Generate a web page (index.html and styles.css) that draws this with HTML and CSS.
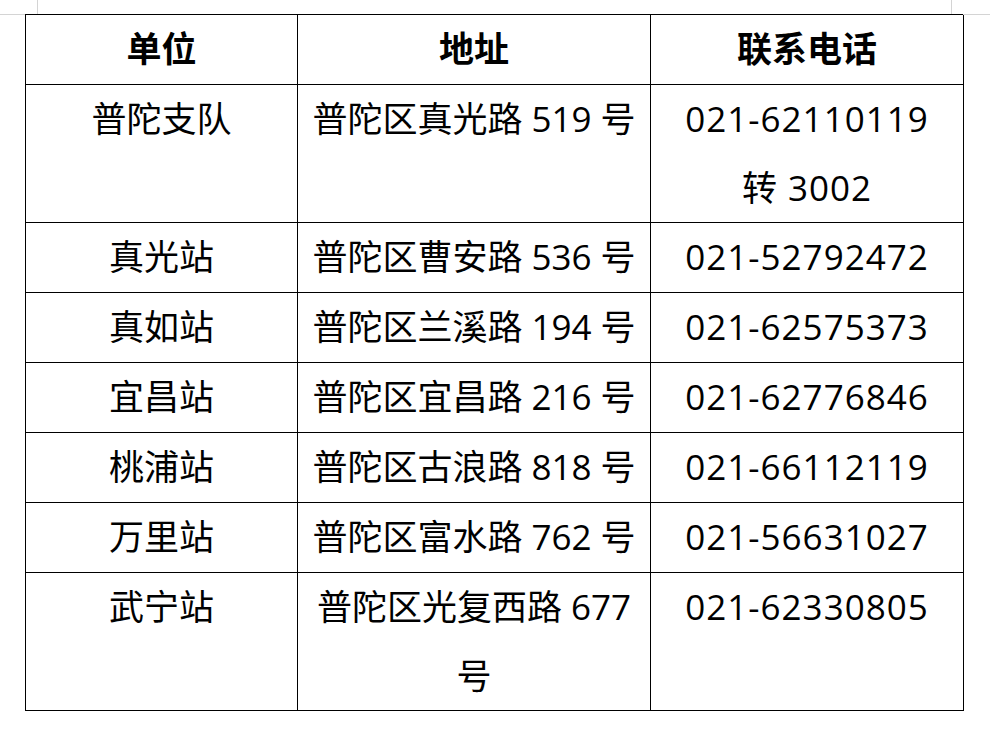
FILE: index.html
```html
<!DOCTYPE html>
<html lang="zh-CN">
<head>
<meta charset="utf-8">
<title>单位地址联系电话</title>
<link rel="stylesheet" href="styles.css">
</head>
<body>
<div class="page">
  <span class="mark mark-tl-h"></span>
  <span class="mark mark-tl-v"></span>
  <span class="mark mark-tr-h"></span>
  <span class="mark mark-tr-v"></span>
  <table class="info">
    <colgroup>
      <col class="c1">
      <col class="c2">
      <col class="c3">
    </colgroup>
    <thead>
      <tr><th>单位</th><th>地址</th><th>联系电话</th></tr>
    </thead>
    <tbody>
      <tr><td>普陀支队</td><td class="addr">普陀区真光路 519 号</td><td class="tel">021-62110119 转&nbsp;3002</td></tr>
      <tr><td>真光站</td><td class="addr">普陀区曹安路 536 号</td><td class="tel">021-52792472</td></tr>
      <tr><td>真如站</td><td class="addr">普陀区兰溪路 194 号</td><td class="tel">021-62575373</td></tr>
      <tr><td>宜昌站</td><td class="addr">普陀区宜昌路 216 号</td><td class="tel">021-62776846</td></tr>
      <tr><td>桃浦站</td><td class="addr">普陀区古浪路 818 号</td><td class="tel">021-66112119</td></tr>
      <tr><td>万里站</td><td class="addr">普陀区富水路 762 号</td><td class="tel">021-56631027</td></tr>
      <tr><td>武宁站</td><td class="addr">普陀区光复西路 677 号</td><td class="tel">021-62330805</td></tr>
    </tbody>
  </table>
</div>
</body>
</html>
```

FILE: styles.css
```css
html, body {
  margin: 0;
  padding: 0;
  background: #ffffff;
}
.page {
  position: relative;
  padding: 14px 0 0 25px;
  width: 994px;
  height: 733px;
  box-sizing: border-box;
}
.mark {
  position: absolute;
  background: #d4d4d4;
}
.mark-tl-h { left: 0; top: 14px; width: 25px; height: 1px; }
.mark-tl-v { left: 37px; top: 0; width: 1px; height: 14px; }
.mark-tr-h { left: 963px; top: 14px; width: 27px; height: 1px; }
.mark-tr-v { left: 951px; top: 0; width: 1px; height: 14px; }
.info {
  border-collapse: collapse;
  table-layout: fixed;
  width: 938px;
  font-family: "Open Sans", "Noto Sans CJK SC", sans-serif;
  font-size: 35px;
  color: #000;
}
.c1 { width: 272px; }
.c2 { width: 353px; }
.c3 { width: 313px; }
.info th, .info td {
  border: 1px solid #000;
  padding: 0 12px;
  height: 69px;
  line-height: 68.5px;
  text-align: center;
  vertical-align: top;
}
.info th {
  font-weight: 700;
}
.info td {
  font-weight: 400;
}
.info td.addr {
  padding: 0 8px;
}
.info td.tel {
  letter-spacing: 1px;
  padding: 0 14px;
}
```
